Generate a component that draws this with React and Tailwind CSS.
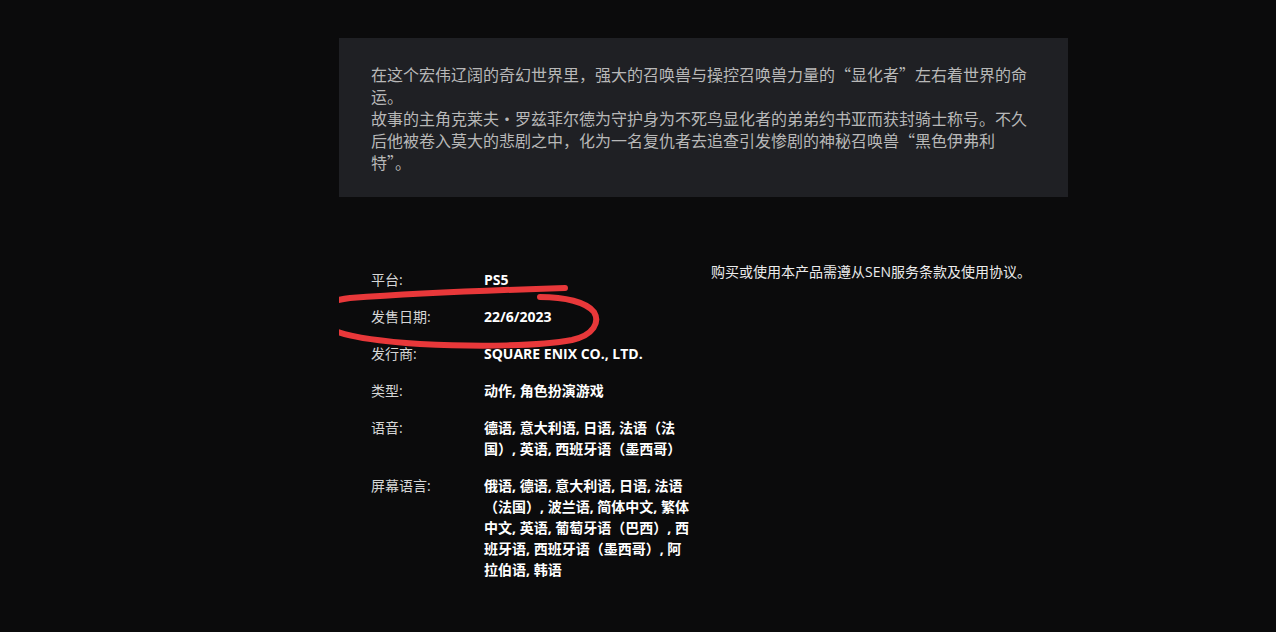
import React from 'react';

const details = [
  { label: '平台:', value: 'PS5' },
  { label: '发售日期:', value: '22/6/2023' },
  { label: '发行商:', value: 'SQUARE ENIX CO., LTD.' },
  { label: '类型:', value: '动作, 角色扮演游戏' },
  { label: '语音:', value: '德语, 意大利语, 日语, 法语（法国）, 英语, 西班牙语（墨西哥）' },
  {
    label: '屏幕语言:',
    value: '俄语, 德语, 意大利语, 日语, 法语（法国）, 波兰语, 简体中文, 繁体中文, 英语, 葡萄牙语（巴西）, 西班牙语, 西班牙语（墨西哥）, 阿拉伯语, 韩语',
  },
];

const font = { fontFamily: '"Open Sans", "Noto Sans CJK SC", sans-serif' };
const cjk = { fontFamily: '"Noto Sans CJK SC", sans-serif' };

const App = () => {
  return (
    <div className="min-h-screen bg-[#0b0b0c] pt-[38px]" style={font}>
      <div className="relative w-[729px] ml-[339px]">
        {/* Description */}
        <div className="bg-[#1f2024] pl-8 pr-8 pt-[25px] pb-[24px]">
          <p className="text-[16px] leading-[22px] text-[#b8b8b8] w-[665px]" style={cjk}>
            在这个宏伟辽阔的奇幻世界里，强大的召唤兽与操控召唤兽力量的“显化者”左右着世界的命运。
            <br />
            故事的主角克莱夫·罗兹菲尔德为守护身为不死鸟显化者的弟弟约书亚而获封骑士称号。不久后他被卷入莫大的悲剧之中，化为一名复仇者去追查引发惨剧的神秘召唤兽“黑色伊弗利
            <br />
            特”。
          </p>
        </div>

        {/* Info */}
        <div className="flex mt-[64px] pl-8">
          <div className="w-[340px] pt-[8px]">
            {details.map((d) => (
              <div key={d.label} className="flex mb-[16px] text-[14px] leading-[21px]">
                <div className="w-[113px] shrink-0 text-[#d6d6d6]">{d.label}</div>
                <div className="w-[210px] font-bold text-white">{d.value}</div>
              </div>
            ))}
          </div>
          <div className="text-[14px] leading-[21px] text-[#ececec]">
            购买或使用本产品需遵从SEN服务条款及使用协议。
          </div>
        </div>

        {/* hand-drawn annotation */}
        <svg
          className="absolute pointer-events-none"
          width="300"
          height="360"
          viewBox="339 0 300 360"
          style={{ left: 0, top: -38 }}
        >
          <path
            d="M565 288 C500 290 420 293 350 298 C325 301 316 310 320 320 C326 333 360 340 420 344 C480 347 540 346 572 340 C594 335 600 322 594 312 C586 302 565 297 540 297"
            fill="none"
            stroke="#e8383a"
            strokeWidth="6"
            strokeLinecap="round"
            strokeLinejoin="round"
          />
        </svg>
      </div>
    </div>
  );
};

export default App;
